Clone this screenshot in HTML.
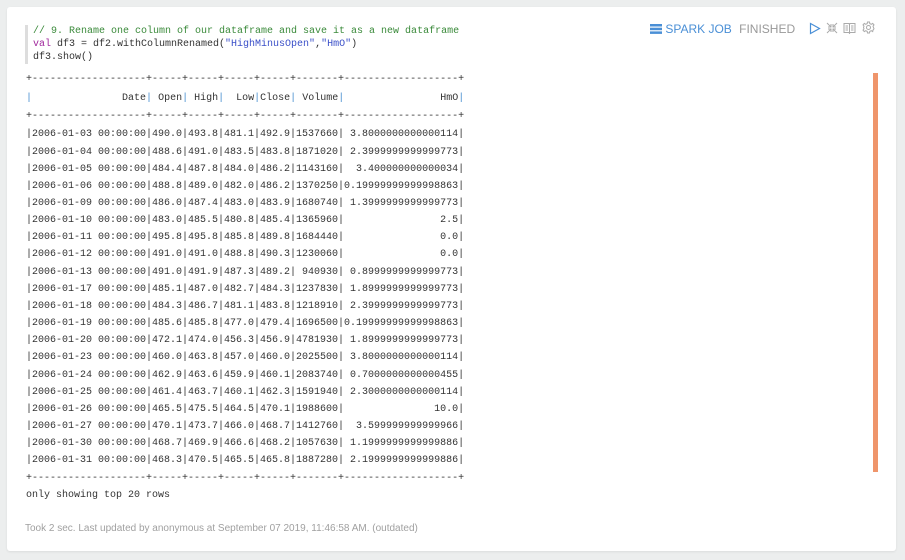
<!DOCTYPE html>
<html><head><style>
body{margin:0;width:905px;height:560px;background:#eceeee;position:relative;overflow:hidden;font-family:"Liberation Sans",sans-serif}
.card{position:absolute;left:7px;top:7px;width:889px;height:544px;background:#fff;border-radius:3px;box-shadow:0 1px 2px rgba(0,0,0,.08)}
.code{position:absolute;left:25px;top:25px;border-left:3px solid #ddd;padding-left:5px;font:10px/13px "Liberation Mono",monospace;color:#333;white-space:pre}
.c{color:#3a8a3a}.k{color:#a0279c}.s{color:#3a4fc8}
pre{position:absolute;left:26px;margin:0;font:10px "Liberation Mono",monospace;color:#333}
.p1{top:71px;line-height:18.5px}
.p2{top:126.4px;line-height:17.16px}
.b{color:#4a90d0}
.foot{position:absolute;left:25px;top:523px;font-size:10px;color:#a0a0a0}
.hdr{position:absolute;left:650px;top:21px;font-size:12px;color:#4a8fd6;white-space:nowrap}
.bar{position:absolute;left:873px;top:73px;width:5px;height:399px;background:#ef956b}
</style></head><body>
<div class="card"></div>
<div class="code"><span class="c">// 9. Rename one column of our dataframe and save it as a new dataframe</span>
<span class="k">val</span> df3 = df2.withColumnRenamed(<span class="s">"HighMinusOpen"</span>,<span class="s">"HmO"</span>)
df3.show()</div>
<div class="hdr"><svg width="12" height="10" style="vertical-align:-1px"><rect x="0" y="0" width="12" height="2.5" fill="#4a8fd6"/><rect x="0" y="3.7" width="12" height="2.5" fill="#4a8fd6"/><rect x="0" y="7.4" width="12" height="2.5" fill="#4a8fd6"/></svg> SPARK JOB <span style="color:#999;margin-left:4px">FINISHED</span>
<svg width="12" height="13" style="vertical-align:-2px;margin-left:10px"><path d="M1.5 1.5 L10.5 6.5 L1.5 11.5Z" fill="none" stroke="#4a8fd6" stroke-width="1.2"/></svg>
<svg width="12" height="12" style="vertical-align:-1px;margin-left:2px" stroke="#aaa" stroke-width="1" fill="none"><path d="M1 1L5 5M5 2V5H2M11 1L7 5M7 2V5H10M1 11L5 7M5 10V7H2M11 11L7 7M7 10V7H10"/></svg>
<svg width="13" height="12" style="vertical-align:-1px;margin-left:2px" stroke="#aaa" stroke-width="1" fill="none"><path d="M1 1.5H6L6.5 2.5L7 1.5H12V10.5H7L6.5 11.5L6 10.5H1Z M6.5 2.5V11 M2.5 4H5M2.5 6H5M2.5 8H5M8 4H10.5M8 6H10.5M8 8H10.5"/></svg>
<svg width="13" height="13" style="vertical-align:-1px;margin-left:2px" stroke="#aaa" stroke-width="1" fill="none"><circle cx="6.5" cy="6.5" r="2"/><path d="M5.5 1H7.5L7.8 2.6L9.3 3.3L10.7 2.4L12 3.9L11 5.2L11.5 6.5L12 7.8L11 9.1L10.7 10.6L9.3 9.7L7.8 10.4L7.5 12H5.5L5.2 10.4L3.7 9.7L2.3 10.6L1 9.1L2 7.8L1.5 6.5L2 5.2L1 3.9L2.3 2.4L3.7 3.3L5.2 2.6Z"/></svg></div>
<pre class="p1">+-------------------+-----+-----+-----+-----+-------+-------------------+
<span class="b">|</span>               Date<span class="b">|</span> Open<span class="b">|</span> High<span class="b">|</span>  Low<span class="b">|</span>Close<span class="b">|</span> Volume<span class="b">|</span>                HmO<span class="b">|</span>
+-------------------+-----+-----+-----+-----+-------+-------------------+</pre>
<pre class="p2">|2006-01-03 00:00:00|490.0|493.8|481.1|492.9|1537660| 3.8000000000000114|
|2006-01-04 00:00:00|488.6|491.0|483.5|483.8|1871020| 2.3999999999999773|
|2006-01-05 00:00:00|484.4|487.8|484.0|486.2|1143160|  3.400000000000034|
|2006-01-06 00:00:00|488.8|489.0|482.0|486.2|1370250|0.19999999999998863|
|2006-01-09 00:00:00|486.0|487.4|483.0|483.9|1680740| 1.3999999999999773|
|2006-01-10 00:00:00|483.0|485.5|480.8|485.4|1365960|                2.5|
|2006-01-11 00:00:00|495.8|495.8|485.8|489.8|1684440|                0.0|
|2006-01-12 00:00:00|491.0|491.0|488.8|490.3|1230060|                0.0|
|2006-01-13 00:00:00|491.0|491.9|487.3|489.2| 940930| 0.8999999999999773|
|2006-01-17 00:00:00|485.1|487.0|482.7|484.3|1237830| 1.8999999999999773|
|2006-01-18 00:00:00|484.3|486.7|481.1|483.8|1218910| 2.3999999999999773|
|2006-01-19 00:00:00|485.6|485.8|477.0|479.4|1696500|0.19999999999998863|
|2006-01-20 00:00:00|472.1|474.0|456.3|456.9|4781930| 1.8999999999999773|
|2006-01-23 00:00:00|460.0|463.8|457.0|460.0|2025500| 3.8000000000000114|
|2006-01-24 00:00:00|462.9|463.6|459.9|460.1|2083740| 0.7000000000000455|
|2006-01-25 00:00:00|461.4|463.7|460.1|462.3|1591940| 2.3000000000000114|
|2006-01-26 00:00:00|465.5|475.5|464.5|470.1|1988600|               10.0|
|2006-01-27 00:00:00|470.1|473.7|466.0|468.7|1412760|  3.599999999999966|
|2006-01-30 00:00:00|468.7|469.9|466.6|468.2|1057630| 1.1999999999999886|
|2006-01-31 00:00:00|468.3|470.5|465.5|465.8|1887280| 2.1999999999999886|
+-------------------+-----+-----+-----+-----+-------+-------------------+
only showing top 20 rows</pre>
<div class="bar"></div>
<div class="foot">Took 2 sec. Last updated by anonymous at September 07 2019, 11:46:58 AM. (outdated)</div>
</body></html>
